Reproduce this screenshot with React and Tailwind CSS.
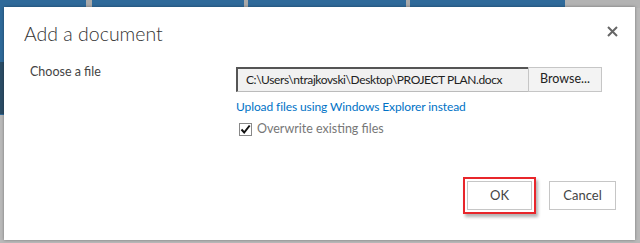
import React, { useState } from 'react';

const font = { fontFamily: 'Lato, "Liberation Sans", sans-serif' };

export default function App() {
  const [overwrite, setOverwrite] = useState(true);

  return (
    <div className="relative w-[640px] h-[243px] overflow-hidden bg-[#b9b9b9]" style={font}>
      {/* page behind the dialog */}
      <div className="absolute inset-x-0 top-0 h-[8px] flex">
        <div className="w-[86px] bg-[#2f6a9a]" />
        <div className="w-[6px] bg-[#a9a9a9]" />
        <div className="w-[152px] bg-[#2f6a9a]" />
        <div className="w-[4px] bg-[#a9a9a9]" />
        <div className="w-[158px] bg-[#2f6a9a]" />
        <div className="w-[4px] bg-[#a9a9a9]" />
        <div className="w-[155px] bg-[#2f6a9a]" />
        <div className="flex-1 bg-[#b3b3b3]" />
      </div>
      <div className="absolute left-0 top-0 w-[6px] h-[115px] bg-[#2f6a9a]" />
      <div className="absolute left-0 top-[62px] w-[6px] h-[52px] bg-[#2b4d66]" />

      {/* dialog */}
      <div className="absolute left-[4px] top-[7px] w-[631px] h-[233px] bg-white shadow-[0_0_3px_rgba(0,0,0,0.35)] flex flex-col">
        <div className="flex items-start justify-between pl-[20px] pr-[17px] pt-[13px]">
          <h1 className="text-[19.5px] font-light text-[#333] leading-[27px]">Add a document</h1>
          <button className="mt-[6px] text-[#666]" aria-label="Close">
            <svg width="11" height="11" viewBox="0 0 11 11">
              <path d="M1 1L10 10M10 1L1 10" stroke="#666" strokeWidth="2" />
            </svg>
          </button>
        </div>

        <div className="flex pl-[26px] mt-[16px]">
          <div className="w-[206px] text-[12.5px] text-[#444] leading-[18px]">Choose a file</div>
          <div className="flex flex-col">
            <div className="flex h-[25px] mt-[4px]">
              <div className="w-[292px] bg-[#f1f1f1] border-t-2 border-l-2 border-[#555] border-b border-b-[#bbb] border-r-0 pl-[8px] text-[12px] tracking-[-0.4px] text-[#222] leading-[21px] whitespace-nowrap overflow-hidden">
                C:\Users\ntrajkovski\Desktop\PROJECT PLAN.docx
              </div>
              <button className="w-[74px] bg-[#f3f3f3] border border-[#c6c6c6] text-[12.5px] text-[#222]">Browse...</button>
            </div>
            <a className="mt-[6px] text-[12px] tracking-[-0.1px] text-[#0072c6] leading-[18px] cursor-pointer">Upload files using Windows Explorer instead</a>
            <label className="mt-[4px] flex items-center gap-[5px] pl-[3px] text-[12.5px] text-[#777] leading-[18px]">
              <span
                onClick={() => setOverwrite(!overwrite)}
                className="w-[13px] h-[13px] border border-[#888] bg-white flex items-center justify-center"
              >
                {overwrite && (
                  <svg width="11" height="11" viewBox="0 0 11 11">
                    <path d="M1.5 5.5L4.2 8.5L9.7 1.5" stroke="#111" strokeWidth="2" fill="none" />
                  </svg>
                )}
              </span>
              Overwrite existing files
            </label>
          </div>
        </div>

        <div className="mt-auto mb-[26px] flex justify-end gap-[13px] pr-[19px]">
          <div className="border-2 border-[#e8262b] p-[2px] shadow-[2px_3px_3px_rgba(0,0,0,0.3)]">
            <button className="w-[65px] h-[29px] bg-white border border-[#c6c6c6] text-[13px] text-[#444]">OK</button>
          </div>
          <button className="mt-[4px] w-[67px] h-[29px] bg-white border border-[#c6c6c6] text-[13px] text-[#444]">Cancel</button>
        </div>
      </div>
    </div>
  );
}
